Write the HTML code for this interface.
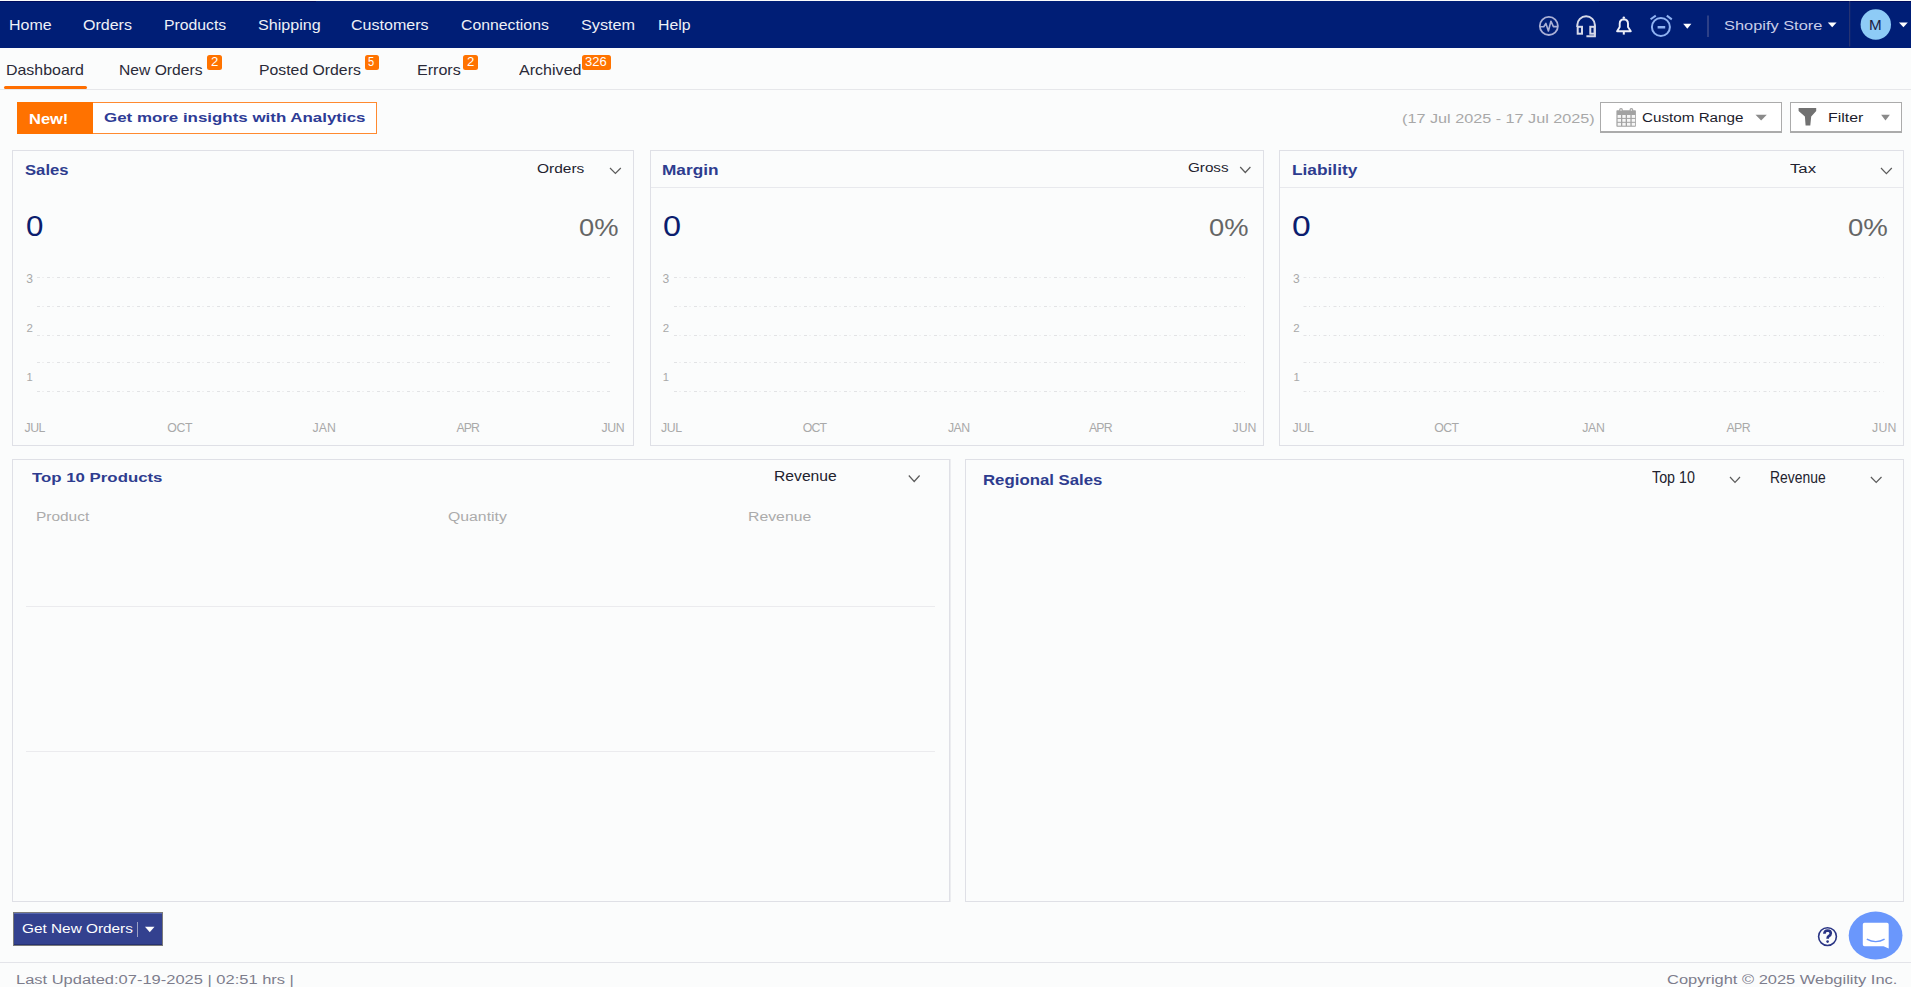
<!DOCTYPE html>
<html><head><meta charset="utf-8"><title>Dashboard</title>
<style>
html,body{margin:0;padding:0;}
body{width:1911px;height:987px;position:relative;overflow:hidden;background:#fbfcfc;font-family:"Liberation Sans",sans-serif;}
.t{position:absolute;white-space:nowrap;line-height:1;transform-origin:0 0;}
.a{position:absolute;box-sizing:border-box;}
</style></head><body>
<!-- navbar -->
<div class="a" style="left:0;top:1px;width:1911px;height:47px;background:#001e76"></div>
<div class="a" style="left:1599px;top:1px;width:312px;height:1px;background:#000c5c"></div>
<div class="a" style="left:0;top:1px;width:316px;height:1px;background:#000c5c"></div>
<svg class="a" style="left:0;top:0" width="1911" height="50" viewBox="0 0 1911 50">
 <!-- pulse -->
 <circle cx="1548.85" cy="25.95" r="9.05" fill="none" stroke="#aab0d6" stroke-width="1.8"/>
 <polyline points="1540,26.7 1543.8,26.7 1545.9,23.4 1548.4,31 1550.9,21.2 1553.4,26.6 1558,26.6" fill="none" stroke="#aab0d6" stroke-width="1.6" stroke-linejoin="round"/>
 <!-- headset -->
 <path d="M1577.3,27 L1577.3,25.1 A8.8,8.8 0 0 1 1594.9,25.1 L1594.9,36.2 L1586.4,36.2" fill="none" stroke="#d6d9e8" stroke-width="2"/>
 <rect x="1577.7" y="26.8" width="4.3" height="6.9" fill="none" stroke="#d6d9e8" stroke-width="2"/>
 <rect x="1590.3" y="26.8" width="4.3" height="6.9" fill="none" stroke="#d6d9e8" stroke-width="2"/>
 <!-- bell -->
 <path d="M1617.1,31.3 L1619.7,27 L1619.7,23.6 Q1619.8,19.6 1623.8,19.3 Q1627.9,19.6 1628,23.6 L1628,27 L1630.8,31.3 Z" fill="none" stroke="#eef0f8" stroke-width="1.9" stroke-linejoin="round"/>
 <circle cx="1623.8" cy="17.6" r="1.2" fill="#eef0f8"/>
 <rect x="1622.8" y="32" width="2" height="2.6" fill="#eef0f8"/>
 <!-- alarm -->
 <circle cx="1660.9" cy="27" r="9" fill="none" stroke="#8fb2f2" stroke-width="2"/>
 <rect x="1657.6" y="26" width="7.6" height="2.5" fill="#8fb2f2"/>
 <line x1="1650.6" y1="19.3" x2="1655.8" y2="15.6" stroke="#8fb2f2" stroke-width="2"/>
 <line x1="1666.8" y1="15.6" x2="1671.8" y2="19.4" stroke="#8fb2f2" stroke-width="2"/>
 <!-- carets -->
 <polygon points="1683.2,23.8 1691.4,23.8 1687.3,28.8" fill="#ffffff"/>
 <polygon points="1827.8,22.6 1836.6,22.6 1832.2,27.3" fill="#ffffff"/>
 <polygon points="1899,22.6 1907.8,22.6 1903.4,27.3" fill="#ffffff"/>
 <!-- separators -->
 <rect x="1707.5" y="15.5" width="1" height="21.5" fill="#5a6397"/>
 <rect x="1849.2" y="1" width="1" height="45.5" fill="#303a72"/>
 <!-- avatar -->
 <circle cx="1875.8" cy="24.5" r="15.2" fill="#8ecbf6"/>
</svg>
<!-- sub nav -->
<div class="a" style="left:0;top:89px;width:1911px;height:1px;background:#e6e7ea"></div>
<div class="a" style="left:4px;top:86px;width:83px;height:2.5px;background:#ff6e00;border-radius:1.5px"></div>
<div class="a" style="left:206.8px;top:54.6px;width:15.1px;height:15.1px;background:#ff7300;border-radius:2.5px"></div>
<div class="a" style="left:364.5px;top:54.6px;width:14.7px;height:15.1px;background:#ff7300;border-radius:2.5px"></div>
<div class="a" style="left:463px;top:54.6px;width:15px;height:15.1px;background:#ff7300;border-radius:2.5px"></div>
<div class="a" style="left:582.2px;top:54.6px;width:29.3px;height:15.1px;background:#ff7300;border-radius:2.5px"></div>
<!-- banner -->
<div class="a" style="left:16.7px;top:102px;width:360.3px;height:31.5px;border:1px solid #ff8a30;background:#ffffff"></div>
<div class="a" style="left:16.7px;top:102px;width:76.2px;height:31.5px;background:#ff7200"></div>
<!-- buttons -->
<div class="a" style="left:1600.3px;top:102.2px;width:182px;height:31px;border:1.4px solid #ababab;border-bottom-width:2px;background:#ffffff"></div>
<div class="a" style="left:1790.2px;top:102.2px;width:112.3px;height:31px;border:1.4px solid #ababab;border-bottom-width:2px;background:#ffffff"></div>
<svg class="a" style="left:0;top:0" width="1911" height="140" viewBox="0 0 1911 140">
 <!-- calendar -->
 <rect x="1616.4" y="110.3" width="19.5" height="16.5" rx="0.8" fill="#a2a2a2"/>
 <circle cx="1621" cy="109.9" r="1.9" fill="#a2a2a2"/><circle cx="1621" cy="110" r="0.8" fill="#f6f6f6"/>
 <circle cx="1631.4" cy="109.9" r="1.9" fill="#a2a2a2"/><circle cx="1631.4" cy="110" r="0.8" fill="#f6f6f6"/>
 <g fill="#f6f6f6"><rect x="1617.6" y="115.0" width="3.4" height="2.9"/><rect x="1622.3" y="115.0" width="3.4" height="2.9"/><rect x="1627.0" y="115.0" width="3.4" height="2.9"/><rect x="1631.7" y="115.0" width="3.4" height="2.9"/><rect x="1617.6" y="118.9" width="3.4" height="2.9"/><rect x="1622.3" y="118.9" width="3.4" height="2.9"/><rect x="1627.0" y="118.9" width="3.4" height="2.9"/><rect x="1631.7" y="118.9" width="3.4" height="2.9"/><rect x="1617.6" y="122.8" width="3.4" height="2.9"/><rect x="1622.3" y="122.8" width="3.4" height="2.9"/><rect x="1627.0" y="122.8" width="3.4" height="2.9"/><rect x="1631.7" y="122.8" width="3.4" height="2.9"/></g>
 <!-- funnel -->
 <path d="M1798.6,108 L1816.2,108 L1816.2,110.9 L1811.2,116.5 L1810.3,125.5 L1805.6,125.5 L1804.9,116.5 L1798.6,110.9 Z" fill="#717171"/>
 <!-- carets -->
 <polygon points="1755.5,114.7 1766.8,114.7 1761.15,120.5" fill="#8a8a8a"/>
 <polygon points="1881.1,114.7 1889.9,114.7 1885.5,120.5" fill="#8a8a8a"/>
</svg>
<!-- cards -->
<div class="a" style="left:12px;top:150px;width:622px;height:296px;border:1px solid #dfe0e6"></div>
<div class="a" style="left:650px;top:150px;width:614px;height:296px;border:1px solid #dfe0e6"></div>
<div class="a" style="left:1279px;top:150px;width:625px;height:296px;border:1px solid #dfe0e6"></div>
<div class="a" style="left:651px;top:187px;width:612px;height:1px;background:#e8e9ed"></div>
<div class="a" style="left:1280px;top:187px;width:623px;height:1px;background:#e8e9ed"></div>
<div class="a" style="left:12px;top:459px;width:938px;height:443px;border:1px solid #dfe0e6"></div>
<div class="a" style="left:950px;top:459px;width:1px;height:443px;background:#ecedf0"></div>
<div class="a" style="left:965px;top:459px;width:939px;height:443px;border:1px solid #dfe0e6"></div>
<div class="a" style="left:26px;top:606px;width:909px;height:1px;background:#ebebee"></div>
<div class="a" style="left:26px;top:751px;width:909px;height:1px;background:#ebebee"></div>
<svg class="a" style="left:0;top:0" width="1911" height="500" viewBox="0 0 1911 500">
 <g stroke="#e2e3e5" stroke-width="1" stroke-dasharray="3,2.5,1,3.5" fill="none">
  <path d="M37,277.5H610 M37,306.5H610 M37,335.5H610 M37,362.5H610 M37,391.5H610"/>
  <path d="M674,277.5H1245 M674,306.5H1245 M674,335.5H1245 M674,362.5H1245 M674,391.5H1245"/>
  <path d="M1303.5,277.5H1884 M1303.5,306.5H1884 M1303.5,335.5H1884 M1303.5,362.5H1884 M1303.5,391.5H1884"/>
 </g>
 <g stroke="#5b5b5b" stroke-width="1.2" fill="none">
  <polyline points="610,168 615.4,173.4 620.8,168"/>
  <polyline points="1240.2,167 1245.3,172.5 1250.4,167"/>
  <polyline points="1881,168 1886.4,173.6 1891.8,168"/>
  <polyline points="908.8,475.5 914.2,481.5 919.6,475.5"/>
  <polyline points="1730,477 1735,482.4 1740,477"/>
  <polyline points="1870.9,477 1876.2,482.4 1881.5,477"/>
 </g>
</svg>
<!-- bottom button -->
<div class="a" style="left:13px;top:912px;width:150px;height:34px;border:1px solid #7a7a7a;background:#33418f"></div>
<div class="a" style="left:14px;top:913px;width:148px;height:1.2px;background:#5666b0"></div>
<div class="a" style="left:14px;top:943.5px;width:148px;height:1.5px;background:#263171"></div>
<div class="a" style="left:137px;top:922px;width:1.2px;height:14.7px;background:#9aa0c4"></div>
<svg class="a" style="left:0;top:900px" width="1911" height="87" viewBox="0 900 1911 87">
 <polygon points="145,926.8 154.5,926.8 149.75,932.2" fill="#ffffff"/>
 <!-- help -->
 <circle cx="1827.5" cy="936.6" r="8.9" fill="none" stroke="#2a3585" stroke-width="1.6"/>
 <path d="M1824.4,933.8 Q1824.5,930.6 1827.6,930.5 Q1830.8,930.6 1830.8,933.3 Q1830.7,935.2 1828.7,936.2 Q1827.6,936.9 1827.6,938.8" fill="none" stroke="#2a3585" stroke-width="2.7"/>
 <circle cx="1827.6" cy="941.6" r="1.3" fill="#2a3585"/>
 <!-- chat -->
 <ellipse cx="1875.6" cy="935.6" rx="26.9" ry="24" fill="#6a97fc"/>
 <path d="M1864.5,922.7 L1887,922.7 Q1888.7,922.7 1888.7,924.4 L1888.7,948.6 L1883.5,946.3 L1864.5,946.3 Q1862.8,946.3 1862.8,944.6 L1862.8,924.4 Q1862.8,922.7 1864.5,922.7 Z" fill="#ffffff"/>
 <path d="M1866.8,939.1 Q1875.7,944.2 1884.6,939.1" fill="none" stroke="#6a97fc" stroke-width="1.4"/>
</svg>
<div class="a" style="left:0;top:962px;width:1911px;height:1px;background:#e3e4e9"></div>

<div class="t" id="n1" style="left:8.95px;top:18.27px;font-size:14.80px;color:#eef0f7;transform:scaleX(1.0792);">Home</div>
<div class="t" id="n2" style="left:82.95px;top:18.27px;font-size:14.80px;color:#eef0f7;transform:scaleX(1.0828);">Orders</div>
<div class="t" id="n3" style="left:163.67px;top:18.27px;font-size:14.80px;color:#eef0f7;transform:scaleX(1.0654);">Products</div>
<div class="t" id="n4" style="left:257.60px;top:18.27px;font-size:14.80px;color:#eef0f7;transform:scaleX(1.0888);">Shipping</div>
<div class="t" id="n5" style="left:351.25px;top:18.27px;font-size:14.80px;color:#eef0f7;transform:scaleX(1.0840);">Customers</div>
<div class="t" id="n6" style="left:461.36px;top:18.27px;font-size:14.80px;color:#eef0f7;transform:scaleX(1.0677);">Connections</div>
<div class="t" id="n7" style="left:580.69px;top:18.27px;font-size:14.80px;color:#eef0f7;transform:scaleX(1.0975);">System</div>
<div class="t" id="n8" style="left:658.26px;top:18.27px;font-size:14.80px;color:#eef0f7;transform:scaleX(1.0709);">Help</div>
<div class="t" id="shop" style="left:1724.09px;top:19.40px;font-size:13.70px;color:#c9cde8;transform:scaleX(1.1962);">Shopify Store</div>
<div class="t" id="avm" style="left:1869.41px;top:17.66px;font-size:14.22px;color:#1a2142;transform:scaleX(1.0692);">M</div>
<div class="t" id="s1" style="left:6.16px;top:63.27px;font-size:14.80px;color:#2a2a38;transform:scaleX(1.0766);">Dashboard</div>
<div class="t" id="s2" style="left:119.48px;top:63.27px;font-size:14.80px;color:#2a2a38;transform:scaleX(1.0579);">New Orders</div>
<div class="t" id="s3" style="left:259.47px;top:63.27px;font-size:14.80px;color:#2a2a38;transform:scaleX(1.0672);">Posted Orders</div>
<div class="t" id="s4" style="left:417.14px;top:63.27px;font-size:14.80px;color:#2a2a38;transform:scaleX(1.0864);">Errors</div>
<div class="t" id="s5" style="left:519.40px;top:63.27px;font-size:14.80px;color:#2a2a38;transform:scaleX(1.0856);">Archived</div>
<div class="t" id="b1" style="left:210.98px;top:55.70px;font-size:12.41px;color:#ffffff;transform:scaleX(1.0621);">2</div>
<div class="t" id="b2" style="left:368.35px;top:55.70px;font-size:12.41px;color:#ffffff;transform:scaleX(0.8956);">5</div>
<div class="t" id="b3" style="left:467.28px;top:55.70px;font-size:12.41px;color:#ffffff;transform:scaleX(1.0621);">2</div>
<div class="t" id="b4" style="left:584.99px;top:55.70px;font-size:12.41px;color:#ffffff;transform:scaleX(1.0476);">326</div>
<div class="t" id="new" style="left:29.27px;top:111.79px;font-size:14.50px;color:#ffffff;transform:scaleX(1.1348);font-weight:700;">New!</div>
<div class="t" id="ins" style="left:103.87px;top:110.80px;font-size:13.70px;color:#2e3c96;transform:scaleX(1.2351);font-weight:700;">Get more insights with Analytics</div>
<div class="t" id="date" style="left:1402.24px;top:112.10px;font-size:13.70px;color:#a8a8a8;transform:scaleX(1.1836);">(17 Jul 2025 - 17 Jul 2025)</div>
<div class="t" id="cr" style="left:1641.69px;top:111.00px;font-size:13.70px;color:#1c1c2c;transform:scaleX(1.1112);">Custom Range</div>
<div class="t" id="fl" style="left:1827.76px;top:111.00px;font-size:13.70px;color:#1c1c2c;transform:scaleX(1.1602);">Filter</div>
<div class="t" id="c1t" style="left:24.94px;top:163.27px;font-size:14.80px;color:#2e3c8f;transform:scaleX(1.1262);font-weight:700;">Sales</div>
<div class="t" id="c1d" style="left:537.17px;top:161.90px;font-size:13.70px;color:#22222e;transform:scaleX(1.1307);">Orders</div>
<div class="t" id="c1v" style="left:25.92px;top:211.00px;font-size:29.42px;color:#0b1d6e;transform:scaleX(1.0630);">0</div>
<div class="t" id="c1p" style="left:579.35px;top:215.59px;font-size:24.82px;color:#666666;transform:scaleX(1.1005);">0%</div>
<div class="t" id="c2t" style="left:662.42px;top:163.27px;font-size:14.80px;color:#2e3c8f;transform:scaleX(1.1651);font-weight:700;">Margin</div>
<div class="t" id="c2d" style="left:1187.69px;top:160.90px;font-size:13.70px;color:#22222e;transform:scaleX(1.1116);">Gross</div>
<div class="t" id="c2v" style="left:663.19px;top:211.00px;font-size:29.42px;color:#0b1d6e;transform:scaleX(1.1028);">0</div>
<div class="t" id="c2p" style="left:1208.65px;top:215.59px;font-size:24.82px;color:#666666;transform:scaleX(1.1005);">0%</div>
<div class="t" id="c3t" style="left:1291.72px;top:163.27px;font-size:14.80px;color:#2e3c8f;transform:scaleX(1.1692);font-weight:700;">Liability</div>
<div class="t" id="c3d" style="left:1789.74px;top:161.80px;font-size:13.70px;color:#22222e;transform:scaleX(1.2232);">Tax</div>
<div class="t" id="c3v" style="left:1292.05px;top:211.00px;font-size:29.42px;color:#0b1d6e;transform:scaleX(1.1437);">0</div>
<div class="t" id="c3p" style="left:1848.44px;top:215.59px;font-size:24.82px;color:#666666;transform:scaleX(1.1122);">0%</div>
<div class="t" id="p4t" style="left:32.20px;top:470.80px;font-size:13.70px;color:#2e3c8f;transform:scaleX(1.2283);font-weight:700;">Top 10 Products</div>
<div class="t" id="p4d" style="left:774.47px;top:469.15px;font-size:14.00px;color:#22222e;transform:scaleX(1.1201);">Revenue</div>
<div class="t" id="p4c1" style="left:36.49px;top:509.80px;font-size:13.70px;color:#ababab;transform:scaleX(1.1282);">Product</div>
<div class="t" id="p4c2" style="left:448.16px;top:509.80px;font-size:13.70px;color:#ababab;transform:scaleX(1.1538);">Quantity</div>
<div class="t" id="p4c3" style="left:747.56px;top:509.80px;font-size:13.70px;color:#ababab;transform:scaleX(1.1541);">Revenue</div>
<div class="t" id="p5t" style="left:982.85px;top:472.98px;font-size:14.20px;color:#2e3c8f;transform:scaleX(1.1833);font-weight:700;">Regional Sales</div>
<div class="t" id="p5d1" style="left:1651.58px;top:469.46px;font-size:16.36px;color:#22222e;transform:scaleX(0.8734);">Top 10</div>
<div class="t" id="p5d2" style="left:1770.21px;top:469.46px;font-size:16.36px;color:#22222e;transform:scaleX(0.8500);">Revenue</div>
<div class="t" id="gno" style="left:21.78px;top:921.80px;font-size:13.70px;color:#ffffff;transform:scaleX(1.1216);">Get New Orders</div>
<div class="t" id="lu" style="left:15.51px;top:973.10px;font-size:13.70px;color:#7d7d8c;transform:scaleX(1.2039);">Last Updated:07-19-2025 | 02:51 hrs |</div>
<div class="t" id="cp" style="left:1667.33px;top:973.10px;font-size:13.70px;color:#7d7d8c;transform:scaleX(1.2018);">Copyright © 2025 Webgility Inc.</div>
<div class="t" id="ay00" style="left:26.32px;top:273.00px;font-size:12.05px;color:#a9a9a9;">3</div>
<div class="t" id="ay01" style="left:26.56px;top:322.64px;font-size:11.52px;color:#a9a9a9;">2</div>
<div class="t" id="ay02" style="left:26.60px;top:371.67px;font-size:11.26px;color:#a9a9a9;">1</div>
<div class="t" id="ax00" style="left:24.61px;top:422.39px;font-size:12.30px;color:#a9a9a9;letter-spacing:-0.583px;">JUL</div>
<div class="t" id="ax01" style="left:167.22px;top:422.39px;font-size:12.30px;color:#a9a9a9;letter-spacing:-0.283px;">OCT</div>
<div class="t" id="ax02" style="left:312.41px;top:422.39px;font-size:12.30px;color:#a9a9a9;letter-spacing:0.184px;">JAN</div>
<div class="t" id="ax03" style="left:456.40px;top:422.39px;font-size:12.30px;color:#a9a9a9;letter-spacing:-0.877px;">APR</div>
<div class="t" id="ax04" style="left:601.51px;top:422.39px;font-size:12.30px;color:#a9a9a9;letter-spacing:-0.356px;">JUN</div>
<div class="t" id="ay10" style="left:662.42px;top:273.00px;font-size:12.05px;color:#a9a9a9;">3</div>
<div class="t" id="ay11" style="left:662.66px;top:322.64px;font-size:11.52px;color:#a9a9a9;">2</div>
<div class="t" id="ay12" style="left:662.70px;top:371.67px;font-size:11.26px;color:#a9a9a9;">1</div>
<div class="t" id="ax10" style="left:661.01px;top:422.39px;font-size:12.30px;color:#a9a9a9;letter-spacing:-0.333px;">JUL</div>
<div class="t" id="ax11" style="left:802.82px;top:422.39px;font-size:12.30px;color:#a9a9a9;letter-spacing:-0.883px;">OCT</div>
<div class="t" id="ax12" style="left:947.91px;top:422.39px;font-size:12.30px;color:#a9a9a9;letter-spacing:-0.516px;">JAN</div>
<div class="t" id="ax13" style="left:1089.00px;top:422.39px;font-size:12.30px;color:#a9a9a9;letter-spacing:-0.827px;">APR</div>
<div class="t" id="ax14" style="left:1232.61px;top:422.39px;font-size:12.30px;color:#a9a9a9;letter-spacing:-0.106px;">JUN</div>
<div class="t" id="ay20" style="left:1293.12px;top:273.00px;font-size:12.05px;color:#a9a9a9;">3</div>
<div class="t" id="ay21" style="left:1293.36px;top:322.64px;font-size:11.52px;color:#a9a9a9;">2</div>
<div class="t" id="ay22" style="left:1293.40px;top:371.67px;font-size:11.26px;color:#a9a9a9;">1</div>
<div class="t" id="ax20" style="left:1292.61px;top:422.39px;font-size:12.30px;color:#a9a9a9;letter-spacing:-0.283px;">JUL</div>
<div class="t" id="ax21" style="left:1434.22px;top:422.39px;font-size:12.30px;color:#a9a9a9;letter-spacing:-0.533px;">OCT</div>
<div class="t" id="ax22" style="left:1582.21px;top:422.39px;font-size:12.30px;color:#a9a9a9;letter-spacing:-0.266px;">JAN</div>
<div class="t" id="ax23" style="left:1726.40px;top:422.39px;font-size:12.30px;color:#a9a9a9;letter-spacing:-0.477px;">APR</div>
<div class="t" id="ax24" style="left:1872.11px;top:422.39px;font-size:12.30px;color:#a9a9a9;letter-spacing:0.194px;">JUN</div>
</body></html>
